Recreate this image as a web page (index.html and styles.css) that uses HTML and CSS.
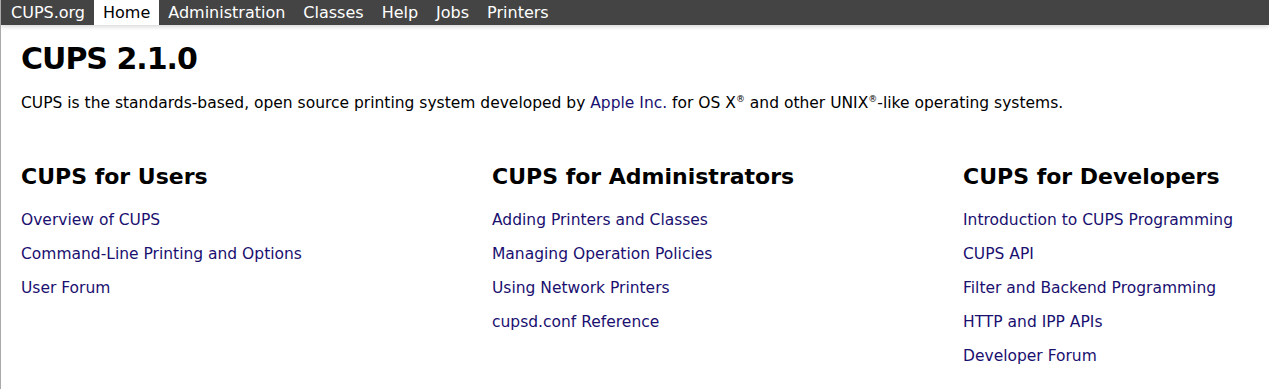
FILE: index.html
```html
<!DOCTYPE html>
<html lang="en">
<head>
    <meta charset="UTF-8">
    <title>Home - CUPS 2.1.0</title>
    <link rel="stylesheet" href="styles.css">
</head>
<body>

<div class="header">
    <ul>
        <li><a href="#">CUPS.org</a></li>
        <li><a class="active" href="#">Home</a></li>
        <li><a href="#">Administration</a></li>
        <li><a href="#">Classes</a></li>
        <li><a href="#">Help</a></li>
        <li><a href="#">Jobs</a></li>
        <li><a href="#">Printers</a></li>
    </ul>
</div>

<div class="body">
    <div class="row">
        <h1>CUPS 2.1.0</h1>
        <p>CUPS is the standards-based, open source printing system developed by <a href="#">Apple Inc.</a> for OS X<sup>&reg;</sup> and other UNIX<sup>&reg;</sup>-like operating systems.</p>
    </div>

    <div class="columns">
        <div class="column">
            <h2>CUPS for Users</h2>
            <p><a href="#">Overview of CUPS</a></p>
            <p><a href="#">Command-Line Printing and Options</a></p>
            <p><a href="#">User Forum</a></p>
        </div>
        <div class="column">
            <h2>CUPS for Administrators</h2>
            <p><a href="#">Adding Printers and Classes</a></p>
            <p><a href="#">Managing Operation Policies</a></p>
            <p><a href="#">Using Network Printers</a></p>
            <p><a href="#">cupsd.conf Reference</a></p>
        </div>
        <div class="column">
            <h2>CUPS for Developers</h2>
            <p><a href="#">Introduction to CUPS Programming</a></p>
            <p><a href="#">CUPS API</a></p>
            <p><a href="#">Filter and Backend Programming</a></p>
            <p><a href="#">HTTP and IPP APIs</a></p>
            <p><a href="#">Developer Forum</a></p>
        </div>
    </div>
</div>

</body>
</html>
```

FILE: styles.css
```css
body {
    font-family: "DejaVu Sans", sans-serif;
    background: #fff;
    color: #000;
    margin: 0;
    border-left: 1px solid #aaa;
    min-height: 100vh;
    box-sizing: border-box;
}

a {
    color: #1a1070;
    text-decoration: none;
}

.header {
    background: #444;
    height: 25px;
    box-shadow: 0 2px 4px rgba(0, 0, 0, 0.15);
}

.header ul {
    list-style: none;
    margin: 0;
    padding: 0 0 0 1px;
    display: flex;
}

.header li a {
    display: block;
    color: #fff;
    font-size: 16px;
    line-height: 25px;
    padding: 0 9px;
}

.header li a.active {
    background: #fff;
    color: #000;
}

.body {
    padding: 16px 20px 0 20px;
}

h1 {
    font-size: 30px;
    letter-spacing: -1px;
    margin: 0 0 18px 0;
}

.row p {
    font-size: 15.5px;
    margin: 0;
}

sup {
    font-size: 9px;
    vertical-align: 6px;
    line-height: 0;
}

.columns {
    display: grid;
    grid-template-columns: 471px 471px 1fr;
    margin-top: 52px;
}

h2 {
    font-size: 22px;
    margin: 0 0 14px 0;
}

.column p {
    font-size: 15.5px;
    margin: 0;
    line-height: 34px;
}
```
